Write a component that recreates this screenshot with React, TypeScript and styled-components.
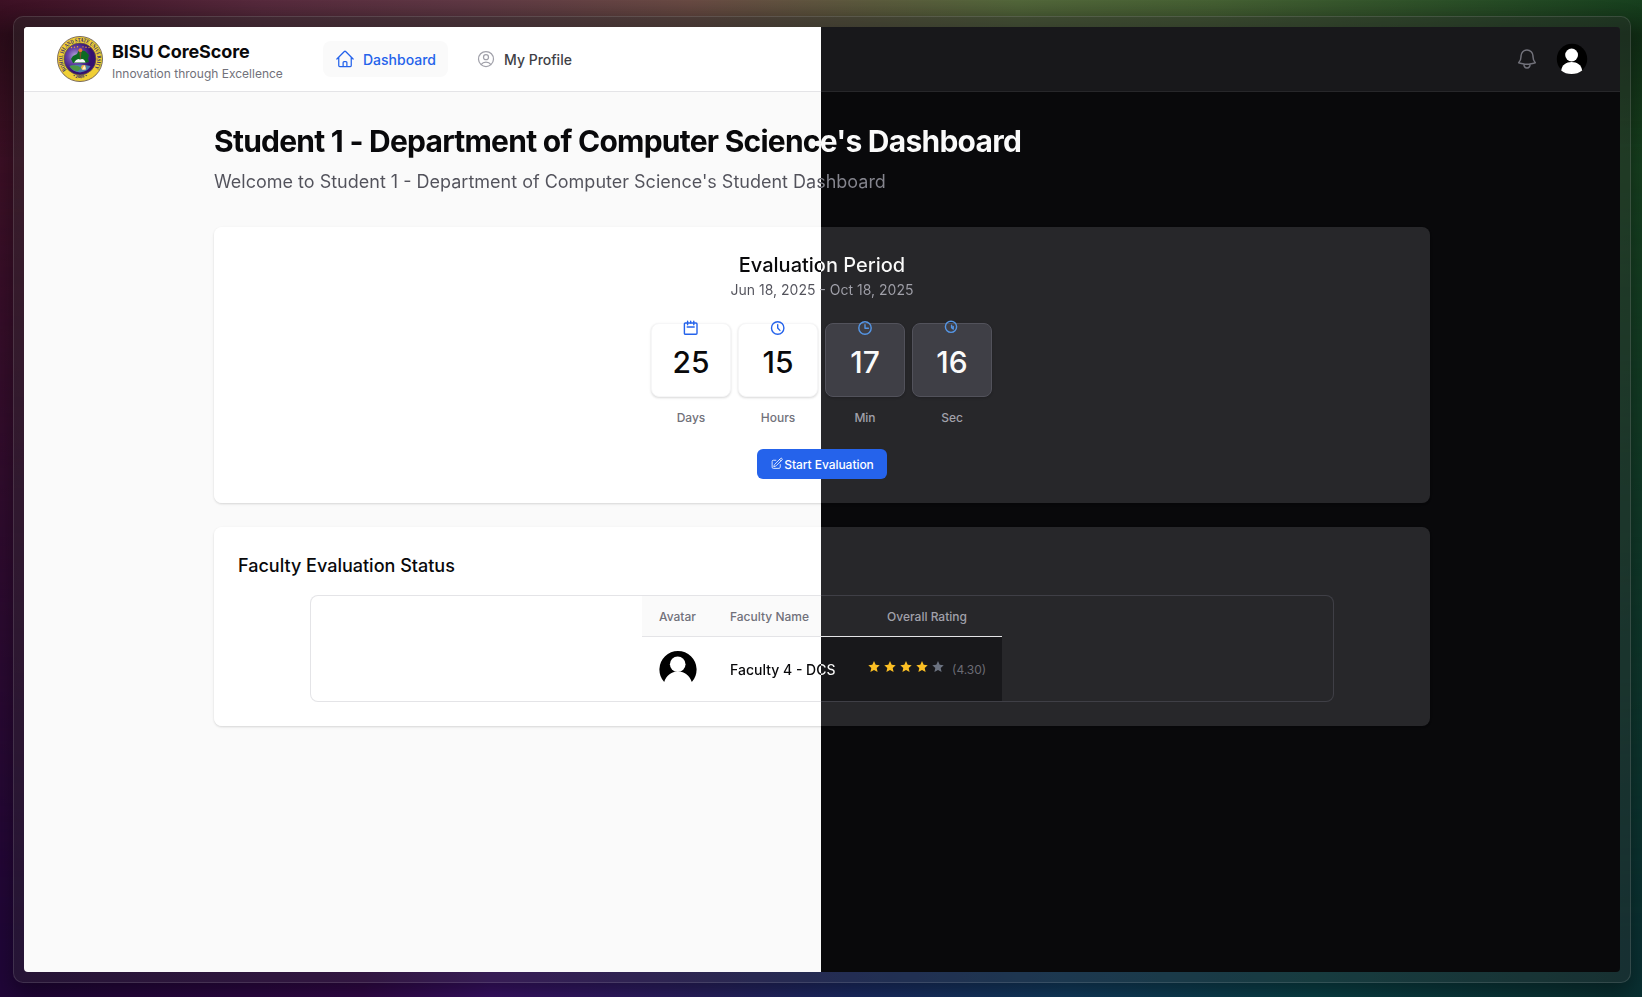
import React from "react";
import styled, { createGlobalStyle, css } from "styled-components";
import {
  HiOutlineHome,
  HiOutlineUserCircle,
  HiOutlineBell,
  HiOutlinePencilSquare,
} from "react-icons/hi2";

/* The preview switches from the light to the dark theme at this x. */
const SEAM = "821px";
const split = (light: string, dark: string) =>
  `linear-gradient(90deg, ${light} ${SEAM}, ${dark} ${SEAM})`;

const splitText = (light: string, dark: string) => css`
  color: transparent;
  background: ${split(light, dark)} fixed;
  -webkit-background-clip: text;
  background-clip: text;
`;

const splitBorderBox = (
  fill: [string, string],
  line: [string, string]
) => css`
  border: 1px solid transparent;
  background: ${split(...fill)} fixed padding-box,
    ${split(...line)} fixed border-box;
`;

const GlobalStyle = createGlobalStyle`
  *, *::before, *::after { box-sizing: border-box; }
  body { margin: 0; background: #1a0a24; }
  h1, h2, p { margin: 0; }
  body, button, table { font-family: Inter, "Liberation Sans", sans-serif; }
`;

const Backdrop = styled.div`
  position: relative;
  isolation: isolate;
  width: 100%;
  height: 997px;
  padding: 16px 11px 14px 13px;
  overflow: hidden;
  background: linear-gradient(180deg, rgba(0, 0, 0, 0) 0, rgba(0, 0, 0, 0.3) 34px, rgba(0, 0, 0, 0) 160px),
    linear-gradient(
      90deg,
      #3d1024 0%,
      #572a3d 16%,
      #5f3844 28%,
      #684a43 42%,
      #5b5a3d 53%,
      #52663a 62%,
      #456033 74%,
      #2c5028 88%,
      #17401e 100%
    );

  &::before {
    content: "";
    position: absolute;
    inset: 0;
    z-index: -1;
    background: linear-gradient(
      90deg,
      #200638 0%,
      #33094a 22%,
      #3a1268 30%,
      #2a2263 43%,
      #1c2c66 52%,
      #123d60 65%,
      #0a4248 80%,
      #0b3638 94%,
      #0a3032 100%
    );
    -webkit-mask-image: linear-gradient(180deg, transparent 12%, #000 95%);
    mask-image: linear-gradient(180deg, transparent 12%, #000 95%);
  }
`;

const Frame = styled.div`
  height: 967px;
  padding: 10px;
  border: 1px solid rgba(255, 255, 255, 0.12);
  border-radius: 10px;
  background: rgba(50, 50, 50, 0.35);
  box-shadow: 0 10px 22px rgba(0, 0, 0, 0.4);
`;

const Page = styled.div`
  height: 945px;
  border-radius: 4px;
  overflow: hidden;
  background: ${split("#fafafa", "#09090b")} fixed;
`;

const Header = styled.header`
  display: flex;
  align-items: center;
  height: 65px;
  padding: 0 32px;
  border-bottom: 1px solid transparent;
  background: ${split("#ffffff", "#18181b")} fixed padding-box,
    ${split("#e4e4e7", "#27272a")} fixed border-box;
`;

const Brand = styled.div`
  display: flex;
  align-items: center;
  gap: 8px;
  width: 267px;
`;

const BrandText = styled.div`
  display: flex;
  flex-direction: column;
  padding: 4px 0 0 0;
`;

const BrandName = styled.span`
  font-size: 18px;
  line-height: 24px;
  font-weight: 700;
  letter-spacing: -0.12px;
  color: #09090b;
  white-space: nowrap;
`;

const BrandMotto = styled.span`
  font-size: 12px;
  line-height: 19px;
  color: #71717a;
  white-space: nowrap;
`;

const Nav = styled.nav`
  display: flex;
  gap: 16px;
`;

const NavItem = styled.a<{ $active?: boolean }>`
  display: flex;
  align-items: center;
  gap: 8px;
  height: 36px;
  padding: 0 12px;
  border-radius: 8px;
  font-size: 14px;
  font-weight: 500;
  color: ${(p) => (p.$active ? "#2563eb" : "#3f3f46")};
  background: ${(p) => (p.$active ? "#fafafa" : "transparent")};
  svg {
    width: 20px;
    height: 20px;
    color: ${(p) => (p.$active ? "#2563eb" : "#a1a1aa")};
  }
`;

const HeaderActions = styled.div`
  display: flex;
  align-items: center;
  gap: 17px;
  margin-left: auto;
  color: #71717a;
`;

const Main = styled.main`
  max-width: 1280px;
  margin: 0 auto;
  padding: 31px 32px 0;
`;

const Title = styled.h1`
  width: fit-content;
  font-size: 30px;
  line-height: 36px;
  font-weight: 700;
  letter-spacing: -0.75px;
  ${splitText("#09090b", "#fafafa")}
`;

const Subtitle = styled.p`
  width: fit-content;
  margin-top: 9px;
  font-size: 18px;
  line-height: 28px;
  ${splitText("#52525b", "#85858e")}
`;

const Card = styled.section<{ $height: number }>`
  height: ${(p) => p.$height}px;
  padding: 24px;
  border-radius: 8px;
  background: ${split("#ffffff", "#27272a")} fixed;
  box-shadow: 0 1px 3px rgba(0, 0, 0, 0.1), 0 1px 2px rgba(0, 0, 0, 0.06);
`;

const Cards = styled.div`
  display: flex;
  flex-direction: column;
  gap: 24px;
  margin-top: 31px;
`;

const Period = styled.div`
  display: flex;
  flex-direction: column;
  align-items: center;
`;

const PeriodTitle = styled.h2`
  font-size: 20px;
  line-height: 28px;
  font-weight: 500;
  ${splitText("#09090b", "#fafafa")}
`;

const PeriodDates = styled.p`
  font-size: 14px;
  line-height: 22px;
  ${splitText("#52525b", "#a1a1aa")}
`;

const Countdown = styled.div`
  display: flex;
  gap: 7px;
  margin-top: 22px;
  padding-right: 1px;
`;

const Unit = styled.div`
  display: flex;
  flex-direction: column;
  align-items: center;
  gap: 13px;
`;

const Tile = styled.div<{ $dark: boolean }>`
  position: relative;
  display: flex;
  align-items: center;
  justify-content: center;
  width: 80px;
  height: 74px;
  padding-top: 4px;
  border: 1px solid ${(p) => (p.$dark ? "#52525b" : "#f6f6f7")};
  border-radius: 8px;
  background: ${(p) => (p.$dark ? "#3f3f46" : "#ffffff")};
  color: ${(p) => (p.$dark ? "#fafafa" : "#09090b")};
  box-shadow: 0 1px 3px rgba(0, 0, 0, 0.1), 0 1px 2px rgba(0, 0, 0, 0.06);
  font-size: 30px;
  line-height: 36px;
  font-weight: 500;
`;

const TileBadge = styled.svg<{ $dark: boolean }>`
  position: absolute;
  top: -4px;
  left: 31px;
  width: 16px;
  height: 16px;
  fill: none;
  stroke: ${(p) => (p.$dark ? "#5596e6" : "#2563eb")};
  stroke-width: 1.4;
  stroke-linecap: round;
  stroke-linejoin: round;
`;

const UnitLabel = styled.span<{ $dark: boolean }>`
  font-size: 12px;
  line-height: 16px;
  font-weight: 500;
  color: ${(p) => (p.$dark ? "#a1a1aa" : "#71717a")};
`;

const StartButton = styled.button`
  display: flex;
  align-items: center;
  justify-content: center;
  width: 130px;
  height: 30px;
  margin-top: 23px;
  padding: 0;
  border: 0;
  border-radius: 6px;
  background: #2563eb;
  color: #ffffff;
  font-size: 12px;
  font-weight: 500;
  letter-spacing: -0.05px;
  svg {
    width: 14px;
    height: 14px;
    padding-bottom: 1px;
  }
`;

const StatusTitle = styled.h2`
  padding-top: 1px;
  font-size: 18px;
  line-height: 28px;
  font-weight: 500;
  color: #09090b;
`;

const TableBox = styled.div`
  display: flex;
  justify-content: center;
  width: 1024px;
  height: 107px;
  margin: 15px auto 0;
  border-radius: 8px;
  ${splitBorderBox(["#ffffff", "#27272a"], ["#e4e4e7", "#3f3f46"])}
`;

const Table = styled.div`
  display: grid;
  grid-template-columns: 71px 139px 150px;
  grid-template-rows: 41px 64px;
  width: 360px;
`;

const HeadRow = styled.div`
  display: grid;
  grid-column: 1 / -1;
  grid-template-columns: subgrid;
  align-items: center;
  border-bottom: 1px solid #e4e4e7;
  background: ${split("#fafafa", "#27272a")} fixed;
`;

const BodyRow = styled(HeadRow)`
  border-bottom: 0;
  background: ${split("#ffffff", "#18181b")} fixed;
`;

const HeadCell = styled.span<{ $dark?: boolean }>`
  padding-left: 17px;
  padding-right: ${(p) => (p.$dark ? "17px" : "0")};
  text-align: ${(p) => (p.$dark ? "center" : "left")};
  font-size: 12px;
  font-weight: 500;
  color: ${(p) => (p.$dark ? "#a1a1aa" : "#71717a")};
`;

const Cell = styled.div`
  padding-left: 17px;
`;

const FacultyName = styled.span`
  font-size: 14px;
  line-height: 20px;
  font-weight: 500;
  ${splitText("#09090b", "#fafafa")}
`;

const Rating = styled.div`
  display: flex;
  align-items: center;
  padding-left: 14px;
`;

const Stars = styled.div`
  display: flex;
  padding-bottom: 4px;
  svg {
    width: 16px;
    height: 16px;
  }
`;

const Score = styled.span`
  margin-left: 6px;
  font-size: 12px;
  color: #6b6b74;
`;

function Seal() {
  return (
    <svg width="48" height="48" viewBox="0 0 48 48">
      <defs>
        <path id="sealTop" d="M10.6 34.8 A17.2 17.2 0 1 1 37.4 34.8" />
        <path id="sealBottom" d="M10.5 37.6 A19.1 19.1 0 0 0 37.5 37.6" />
        <radialGradient id="sealCore" cx="35%" cy="40%">
          <stop offset="0" stopColor="#b3a2d8" />
          <stop offset="0.45" stopColor="#6a48a8" />
          <stop offset="1" stopColor="#35106f" />
        </radialGradient>
      </defs>
      <circle cx="24" cy="24" r="22.5" fill="#f0cf35" stroke="#6d5c52" strokeWidth="0.9" />
      <circle cx="24" cy="24" r="16" fill="url(#sealCore)" stroke="#6a5a40" strokeWidth="0.8" />
      <path d="M15 24l2-3 4-2 2-4 6 1 4 4-1 4 1 3-4 1H17z" fill="#0d6b22" />
      <path d="M13.5 31q10-3 21 0-2 5-10.5 6.5Q16 36.500 13.500 31z" fill="#4a7fae" />
      <path d="M13.500 31q7-2 12 2l-4 3.500q-6-1.500-8-5.500z" fill="#4d9644" />
      <path d="M18 27.500q3-5 6-3 4-2 5.500 3z" fill="#f6f7fb" />
      <path d="M23.200 16h2.400l-.8 8h-.8z" fill="#715329" />
      <circle cx="24.400" cy="15.200" r="1.900" fill="#ef7d32" />
      <circle cx="27.500" cy="32.500" r="2.400" fill="#f3b146" />
      <path d="M26 34.500l2.500-4.500 1.500 4.500z" fill="#fff0c9" />
      {[15.5, 18.5, 21.5, 27, 30, 33].map((x) => (
        <circle key={x} cx={x} cy={11.5 + Math.abs(x - 24) * 0.12} r="0.7" fill="#f1ac33" />
      ))}
      <text fontFamily="Liberation Serif, serif" fontSize="5.8" fontWeight="700" fill="#26236e">
        <textPath href="#sealTop" textLength="75" lengthAdjust="spacingAndGlyphs">
          BOHOL ISLAND STATE UNIVERSITY
        </textPath>
      </text>
      <text fontFamily="Liberation Serif, serif" fontSize="4.6" fontWeight="700" fill="#26236e">
        <textPath href="#sealBottom" startOffset="50%" textAnchor="middle">
          • 2009 •
        </textPath>
      </text>
    </svg>
  );
}

function AccountAvatar() {
  return (
    <svg width="32" height="32" viewBox="0 0 32 32">
      <circle cx="16" cy="16" r="15.2" fill="#000" />
      <circle cx="15.6" cy="12" r="6.4" fill="#fff" />
      <path d="M5.2 27.500C6 21.800 10 18.900 15.600 18.900S25.300 21.800 26.200 27.500C23 30 20 31 15.600 31S8 30 5.200 27.500z" fill="#fff" />
    </svg>
  );
}

const Portrait = styled.svg`
  display: block;
  width: 38px;
  height: 40px;
`;

function FacultyAvatar() {
  return (
    <Portrait viewBox="0 0 38 40">
      <path d="M5.2 33A18.600 18.600 0 1 1 32.800 33C30.800 27 26 22.600 19 22.600S7.200 27 5.200 33z" fill="#000" />
      <circle cx="18.700" cy="15.200" r="7.800" fill="#fff" />
    </Portrait>
  );
}

function Star({ filled }: { filled: boolean }) {
  return (
    <svg viewBox="0 0 16 16" fill={filled ? "#fbbf24" : "#6b7280"}>
      <path d="M8 2l1.700 3.800 4 .4-3 2.700.9 4L8 10.900l-3.600 2 .9-4-3-2.700 4-.4z" />
    </svg>
  );
}

const units = [
  {
    label: "Days",
    value: "25",
    dark: false,
    icon: (
      <>
        <rect x="1.4" y="3" width="12.6" height="11.2" rx="1" />
        <path d="M4.600 1.300v3.400M7.700 1.300v1.800M10.800 1.300v3.400M4.200 7h7" />
      </>
    ),
  },
  {
    label: "Hours",
    value: "15",
    dark: false,
    icon: (
      <>
        <circle cx="7.7" cy="8" r="6.2" />
        <path d="M7.700 4.600V8l2.200 2.400" />
      </>
    ),
  },
  {
    label: "Min",
    value: "17",
    dark: true,
    icon: (
      <>
        <circle cx="8" cy="8" r="6.2" />
        <path d="M8 4.600V8.200h3.400" />
      </>
    ),
  },
  {
    label: "Sec",
    value: "16",
    dark: true,
    icon: (
      <>
        <circle cx="7" cy="6.8" r="5.6" />
        <path d="M7.600 5.200v2.600l1.600 1.200V6.400" />
      </>
    ),
  },
];

export default function App() {
  return (
    <Backdrop>
      <GlobalStyle />
      <Frame>
        <Page>
          <Header>
            <Brand>
              <Seal />
              <BrandText>
                <BrandName>BISU CoreScore</BrandName>
                <BrandMotto>Innovation through Excellence</BrandMotto>
              </BrandText>
            </Brand>
            <Nav>
              <NavItem $active>
                <HiOutlineHome />
                Dashboard
              </NavItem>
              <NavItem>
                <HiOutlineUserCircle />
                My Profile
              </NavItem>
            </Nav>
            <HeaderActions>
              <HiOutlineBell size={24} />
              <AccountAvatar />
            </HeaderActions>
          </Header>
          <Main>
            <Title>Student 1 - Department of Computer Science's Dashboard</Title>
            <Subtitle>
              Welcome to Student 1 - Department of Computer Science's Student Dashboard
            </Subtitle>
            <Cards>
              <Card $height={276}>
                <Period>
                  <PeriodTitle>Evaluation Period</PeriodTitle>
                  <PeriodDates>Jun 18, 2025 - Oct 18, 2025</PeriodDates>
                  <Countdown>
                    {units.map((u) => (
                      <Unit key={u.label}>
                        <Tile $dark={u.dark}>
                          <TileBadge $dark={u.dark} viewBox="0 0 16 16">
                            {u.icon}
                          </TileBadge>
                          {u.value}
                        </Tile>
                        <UnitLabel $dark={u.dark}>{u.label}</UnitLabel>
                      </Unit>
                    ))}
                  </Countdown>
                  <StartButton>
                    <HiOutlinePencilSquare />
                    Start Evaluation
                  </StartButton>
                </Period>
              </Card>
              <Card $height={199}>
                <StatusTitle>Faculty Evaluation Status</StatusTitle>
                <TableBox>
                  <Table>
                    <HeadRow>
                      <HeadCell>Avatar</HeadCell>
                      <HeadCell>Faculty Name</HeadCell>
                      <HeadCell $dark>Overall Rating</HeadCell>
                    </HeadRow>
                    <BodyRow>
                      <Cell>
                        <FacultyAvatar />
                      </Cell>
                      <Cell>
                        <FacultyName>Faculty 4 - DCS</FacultyName>
                      </Cell>
                      <Rating>
                        <Stars>
                          {[1, 2, 3, 4, 5].map((n) => (
                            <Star key={n} filled={n <= 4} />
                          ))}
                        </Stars>
                        <Score>(4.30)</Score>
                      </Rating>
                    </BodyRow>
                  </Table>
                </TableBox>
              </Card>
            </Cards>
          </Main>
        </Page>
      </Frame>
    </Backdrop>
  );
}
